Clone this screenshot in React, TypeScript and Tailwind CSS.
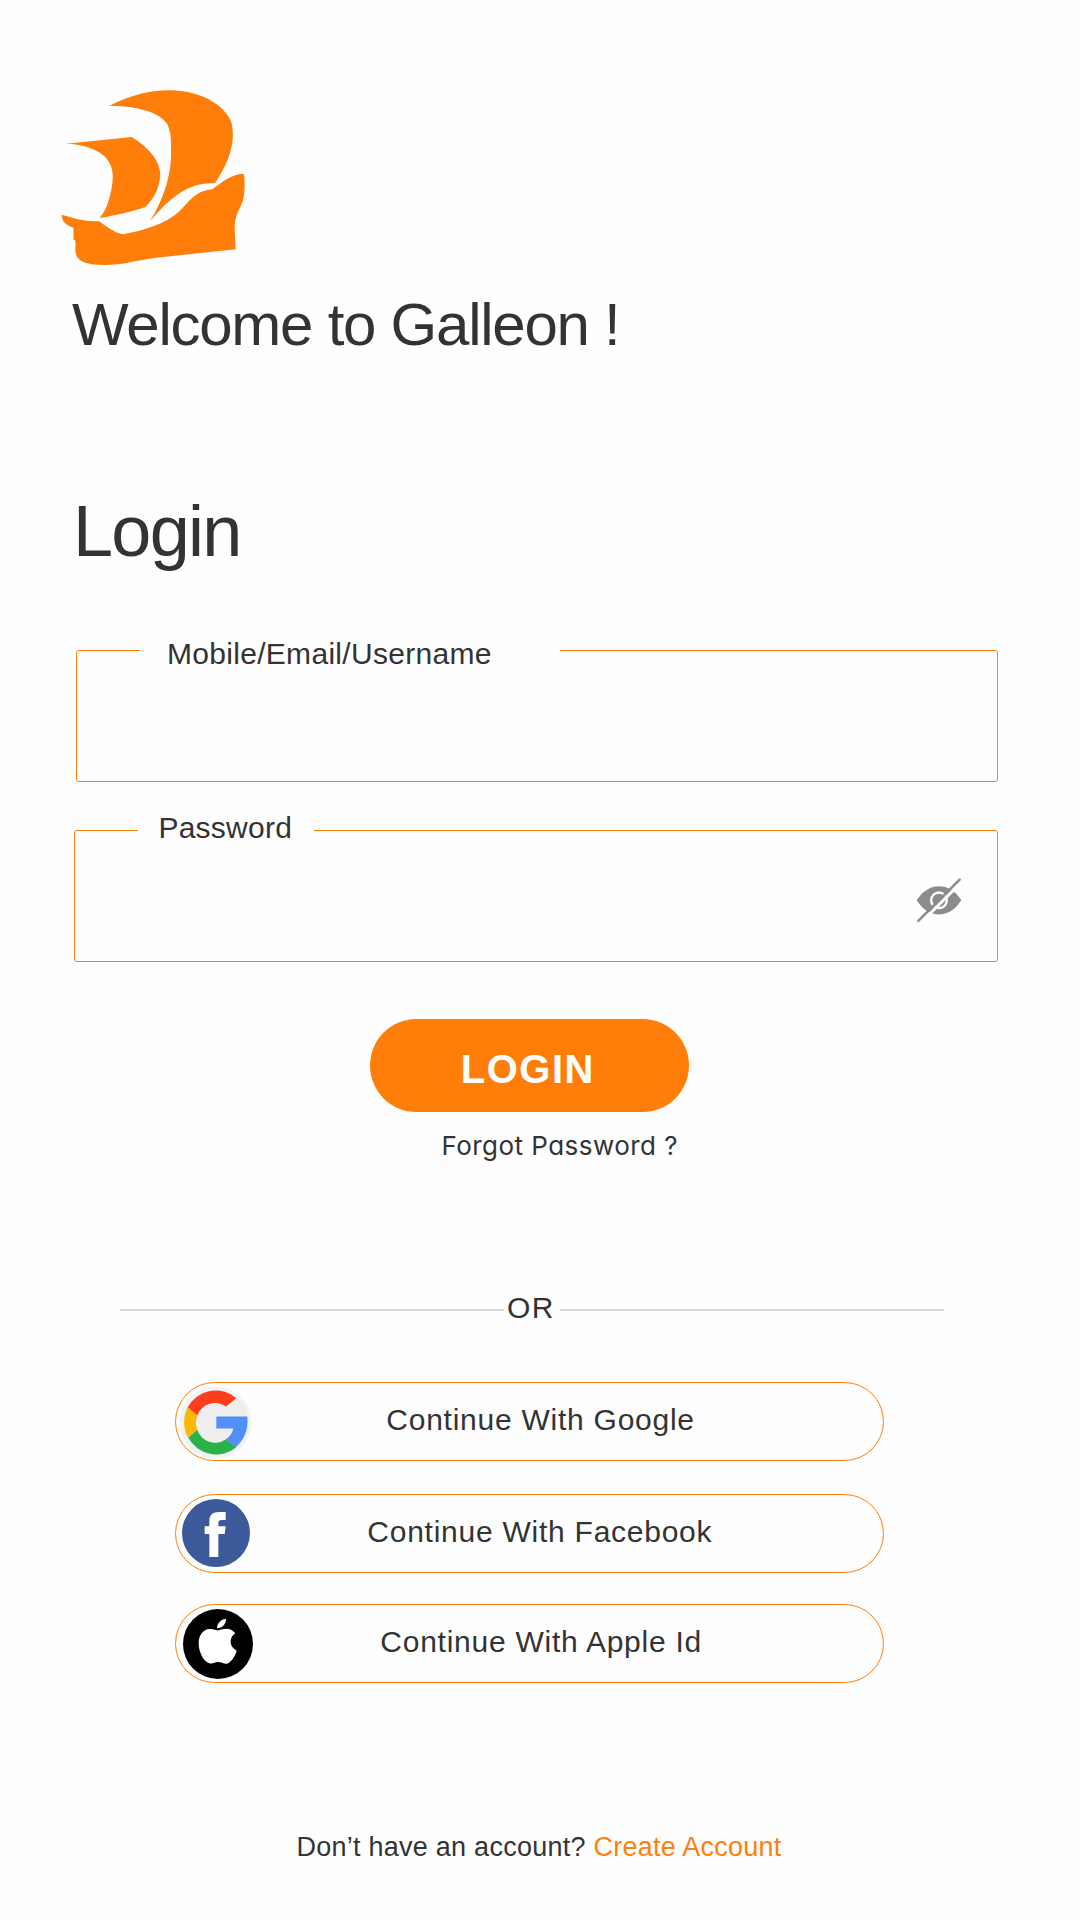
import React from "react";

function GalleonLogo() {
  return (
    <svg viewBox="0 0 630 585" className="ml-[50px] h-[195px] w-[210px] shrink-0" fill="#ff7d09">
      <path d="M178 78C240 44 310 28 370 31C450 35 522 72 544 126C560 190 532 254 495 310C425 304 365 345 300 424C345 350 367 275 363 200C363 172 362 150 350 130C325 94 250 76 178 78Z" />
      <path d="M48 191L245 171C300 205 331 245 331 285C328 325 312 355 287 380C260 392 200 405 148 414C172 390 180 350 186 318C191 285 192 248 150 218C120 200 90 193 48 191Z" />
      <path d="M35 404C70 415 110 425 148 424C165 437 195 460 219 463C290 450 340 430 375 405C412 380 425 333 487 328C510 310 540 285 576 281Q583 281 583 290C587 350 578 368 565 393C549 430 555 440 557 508L320 533C260 540 220 555 165 555C110 555 83 545 77 520C74 505 79 495 75 480L71 480L70 443C50 436 34 425 35 404Z" />
    </svg>
  );
}

function EyeOffIcon() {
  return (
    <svg viewBox="48 50 138 139" className="mr-[35px] mt-[46px] h-[46.3px] w-[46px] shrink-0">
      <path d="M50 120C86 64 148 64 184 120C148 177 86 177 50 120Z" fill="#8c8c8c" />
      <circle cx="117" cy="120" r="23.5" fill="none" stroke="#fefefe" strokeWidth="7" />
      <path d="M62 188L186 64" stroke="#fefefe" strokeWidth="9" />
      <path d="M55 182L179 58" stroke="#8c8c8c" strokeWidth="7.5" strokeLinecap="round" />
    </svg>
  );
}

function GoogleIcon() {
  return (
    <svg viewBox="49 37.5 231 231" className="h-[77px] w-[77px] shrink-0">
      <circle cx="168" cy="156" r="107" fill="#e9ebee" />
      <circle cx="168" cy="156" r="104" fill="#fafafa" />
      <circle cx="168" cy="156" r="101" fill="#eeeeee" />
      <path d="M230 83A95 95 0 0 0 84 111L113 135A56 56 0 0 1 199 108Z" fill="#ff3e1d" />
      <path d="M84 111A95 95 0 0 0 86 202L113 178A56 56 0 0 1 113 135Z" fill="#fdb901" />
      <path d="M86 202A95 95 0 0 0 230 230L198 207A56 56 0 0 1 113 178Z" fill="#2bb14a" />
      <path d="M170 138H263C267 180 252 210 228 230L198 207C210 199 218 188 221 174H170Z" fill="#518ef8" />
    </svg>
  );
}

function FacebookIcon() {
  return (
    <svg viewBox="48 45 231 231" className="h-[77px] w-[77px] shrink-0">
      <circle cx="168" cy="159" r="102" fill="#3c5a9a" />
      <path d="M148 231V162H134V139H148V124C148 104 158 96 178 96H197V120H185C177 120 175 124 175 130V139H197L194 162H175V231Z" fill="#fff" />
    </svg>
  );
}

function AppleIcon() {
  return (
    <svg viewBox="48 375 231 231" className="h-[77px] w-[77px] shrink-0">
      <circle cx="174" cy="492" r="105" fill="#000" />
      <path d="M175 451C190 447 210 439 226 460C207 472 206 500 230 512C225 530 212 548 200 551C190 552 185 546 174 546C164 546 158 553 148 550C130 545 116 515 116 490C116 465 130 448 148 447C160 446 167 451 175 451Z" fill="#fff" />
      <path d="M171 445C171 430 182 418 198 416C199 430 188 444 171 445Z" fill="#fff" />
    </svg>
  );
}

const social =
  "flex h-[79px] w-[709px] items-center rounded-full border border-[#ff7f0c] text-[30px] leading-[40px] tracking-[0.75px] whitespace-nowrap";

export default function App() {
  return (
    <main className="flex h-[1920px] w-[1080px] flex-col items-start overflow-hidden bg-[#fefefe] pt-[80px] font-['Liberation_Sans',Arial,sans-serif] text-[#333333]">
      <GalleonLogo />
      <h1 className="mt-[20px] ml-[72px] text-[60px] leading-[60px] tracking-[-1.25px] whitespace-nowrap">
        Welcome to Galleon !
      </h1>
      <h2 className="mt-[136px] ml-[73px] text-[72px] leading-[80px] tracking-[-1.7px]">Login</h2>

      <div className="mt-[79px] ml-[76px] flex h-[132px] w-[922px] items-start rounded-[3px] border border-[#ff7f0c]">
        <label className="-mt-[17px] ml-[63px] h-[40px] w-[420px] bg-[#fefefe] pl-[27px] text-[30px] leading-[40px] tracking-[0.3px]">
          Mobile/Email/Username
        </label>
      </div>
      <div className="mt-[48px] ml-[74px] flex h-[132px] w-[924px] items-start justify-between rounded-[3px] border border-[#ff7f0c]">
        <label className="-mt-[23px] ml-[63px] h-[40px] w-[176px] bg-[#fefefe] pl-[20.4px] text-[30px] leading-[40px] tracking-[0.26px]">
          Password
        </label>
        <EyeOffIcon />
      </div>

      <button className="mt-[57px] ml-[370px] h-[93px] w-[319px] rounded-full bg-[#ff7d09] pt-[8px] pl-[90.8px] text-left text-[40px] font-bold leading-[85px] tracking-[1.5px] text-white">
        LOGIN
      </button>
      <a className="mt-[19px] ml-[441.5px] font-['Inter',sans-serif] text-[26px] leading-[30px] font-normal whitespace-nowrap [font-feature-settings:'cv11'] tracking-[0.45px]">
        Forgot Password ?
      </a>

      <div className="mt-[129px] ml-[120px] flex h-[40px] w-[824px] items-center">
        <span className="h-[2px] w-[384px] bg-[#d8dad9]" />
        <span className="w-[56px] pb-[4px] pl-[3px] text-[30px] leading-[36px] tracking-[1.4px]">OR</span>
        <span className="h-[2px] w-[384px] bg-[#d8dad9]" />
      </div>

      <button className={`mt-[52px] ml-[175px] ${social}`}>
        <GoogleIcon />
        <span className="ml-[133.3px] pb-[4px]">Continue With Google</span>
      </button>
      <button className={`mt-[33px] ml-[175px] ${social}`}>
        <FacebookIcon />
        <span className="ml-[114.3px] pb-[4px]">Continue With Facebook</span>
      </button>
      <button className={`mt-[31px] ml-[175px] ${social}`}>
        <AppleIcon />
        <span className="ml-[127.3px] pb-[4px]">Continue With Apple Id</span>
      </button>

      <p className="mt-[144px] ml-[296.5px] text-[27px] leading-[40px] tracking-[0.25px] whitespace-nowrap">
        Don’t have an account? <a className="text-[#ff7f0c]">Create Account</a>
      </p>
    </main>
  );
}
